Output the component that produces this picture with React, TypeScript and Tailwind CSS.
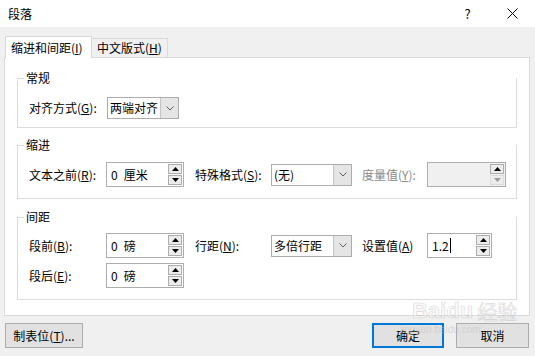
import React from "react";

const Up = ({ color = "#000" }: { color?: string }) => (
  <svg width="7" height="4" viewBox="0 0 7 4"><path d="M0 4 L3.5 0 L7 4 Z" fill={color} /></svg>
);
const Down = ({ color = "#000" }: { color?: string }) => (
  <svg width="7" height="4" viewBox="0 0 7 4"><path d="M0 0 L3.5 4 L7 0 Z" fill={color} /></svg>
);

function Spin({ num, unit, w, disabled, cursor }: { num: string; unit?: string; w: string; disabled?: boolean; cursor?: boolean }) {
  return (
    <div className={`${w} h-[25px] border border-[#adadad] flex items-stretch ${disabled ? "bg-[#f0f0f0]" : "bg-white"}`}>
      <div className="flex-1 flex items-center pl-[4px] leading-none">
        <span>{num}</span>
        {unit && <span className="ml-[6px]">{unit}</span>}
        {cursor && <span className="ml-[1px] w-px h-[15px] bg-black" />}
      </div>
      <div className="w-[14px] flex flex-col gap-px py-px mr-px">
        <div className="flex-1 border border-[#adadad] bg-[#ececec] flex items-center justify-center">
          <Up />
        </div>
        <div className={`flex-1 border ${disabled ? "border-[#dcdcdc]" : "border-[#adadad]"} bg-[#ececec] flex items-center justify-center`}>
          <Down color={disabled ? "#9a9a9a" : "#000"} />
        </div>
      </div>
    </div>
  );
}

function Combo({ value, w }: { value: string; w: string }) {
  return (
    <div className={`${w} h-[22px] border border-[#adadad] bg-white flex items-stretch`}>
      <div className="flex-1 flex items-center pl-[2px] leading-none whitespace-nowrap overflow-hidden">{value}</div>
      <div className="w-[18px] bg-[#e5e5e5] border-l border-[#c4c4c4] flex items-center justify-center">
        <svg width="8" height="5" viewBox="0 0 8 5"><path d="M0.5 0.5 L4 4 L7.5 0.5" fill="none" stroke="#606060" strokeWidth="1" /></svg>
      </div>
    </div>
  );
}

function Group({ title, h, pt, children }: { title: string; h: string; pt: string; children: React.ReactNode }) {
  return (
    <div className={`relative mx-[12px] ${h} ${pt} border-x border-b border-[#dcdcdc]`}>
      <span className="absolute left-0 top-0 w-[6px] h-px bg-[#dcdcdc]" />
      <span className="absolute left-[7px] top-[-8px] leading-[16px] px-px bg-white">{title}</span>
      <div className="pl-[11px] flex flex-col gap-[5px]">{children}</div>
    </div>
  );
}

const Label = ({ w, children, gray }: { w: string; children: React.ReactNode; gray?: boolean }) => (
  <div className={`${w} shrink-0 leading-none whitespace-nowrap ${gray ? "text-[#8a8a8a]" : ""}`}>{children}</div>
);

export default function App() {
  return (
    <div className="w-[535px] h-[356px] bg-[#f0f0f0] flex flex-col text-[12px] text-black font-['Noto_Sans_CJK_SC','Microsoft_YaHei',sans-serif] relative overflow-hidden">
      {/* title bar */}
      <div className="h-[27px] bg-white flex items-center shrink-0">
        <span className="pl-[8px] leading-none">段落</span>
        <div className="ml-auto flex h-full">
          <div className="w-[45px] flex items-center justify-center text-[13px] leading-none">?</div>
          <div className="w-[45px] flex items-center justify-center">
            <svg width="11" height="11" viewBox="0 0 11 11"><path d="M0.5 0.5 L10.5 10.5 M10.5 0.5 L0.5 10.5" stroke="#000" strokeWidth="1" /></svg>
          </div>
        </div>
      </div>

      {/* tabs */}
      <div className="pt-[9px] pl-[5px] flex items-end shrink-0">
        <div className="relative z-10 mb-[-1px] w-[87px] h-[22px] bg-white border border-b-0 border-[#d9d9d9] flex items-center pl-[5px] leading-none">
          缩进和间距(<u>I</u>)
        </div>
        <div className="w-[76px] h-[19px] border border-l-0 border-b-0 border-[#d9d9d9] flex items-center pl-[5px] leading-none">
          中文版式(<u>H</u>)
        </div>
      </div>

      {/* panel */}
      <div className="mx-[4px] w-[526px] h-[259px] border border-[#d9d9d9] bg-white shrink-0 pt-[20px] flex flex-col">
        <Group title="常规" h="h-[50px]" pt="pt-[19px]">
          <div className="flex items-center">
            <Label w="w-[78px]">对齐方式(<u>G</u>):</Label>
            <Combo value="两端对齐" w="w-[72px]" />
          </div>
        </Group>

        <div className="h-[17px] shrink-0" />

        <Group title="缩进" h="h-[54px]" pt="pt-[17px]">
          <div className="flex items-center">
            <Label w="w-[77px]">文本之前(<u>R</u>):</Label>
            <Spin num="0" unit="厘米" w="w-[78px]" />
            <div className="w-[11px]" />
            <Label w="w-[76px]">特殊格式(<u>S</u>):</Label>
            <Combo value="(无)" w="w-[81px]" />
            <div className="w-[10px]" />
            <Label w="w-[65px]" gray>度量值(<u>Y</u>):</Label>
            <Spin num="" w="w-[79px]" disabled />
          </div>
        </Group>

        <div className="h-[18px] shrink-0" />

        <Group title="间距" h="h-[83px]" pt="pt-[16px]">
          <div className="flex items-center">
            <Label w="w-[77px]">段前(<u>B</u>):</Label>
            <Spin num="0" unit="磅" w="w-[78px]" />
            <div className="w-[11px]" />
            <Label w="w-[76px]">行距(<u>N</u>):</Label>
            <Combo value="多倍行距" w="w-[81px]" />
            <div className="w-[10px]" />
            <Label w="w-[65px]">设置值(<u>A</u>)</Label>
            <Spin num="1.2" w="w-[65px]" cursor />
          </div>
          <div className="flex items-center">
            <Label w="w-[77px]">段后(<u>E</u>):</Label>
            <Spin num="0" unit="磅" w="w-[78px]" />
          </div>
        </Group>
      </div>

      {/* buttons */}
      <div className="mt-[7px] flex items-start shrink-0">
        <div className="ml-[5px] w-[78px] h-[25px] border border-[#adadad] bg-[#e1e1e1] flex items-center justify-center leading-none">
          制表位(<u>T</u>)...
        </div>
        <div className="ml-auto w-[72px] h-[25px] border-2 border-[#0078d7] bg-[#e1e1e1] flex items-center justify-center leading-none">
          确定
        </div>
        <div className="ml-[12px] mr-[6px] w-[73px] h-[25px] border border-[#adadad] bg-[#e1e1e1] flex items-center justify-center leading-none">
          取消
        </div>
      </div>

      {/* watermark */}
      <div className="absolute left-[400px] top-[300px] pointer-events-none select-none flex flex-col items-start opacity-50">
        <div className="flex items-end leading-none text-[#f4f4f4] font-['Liberation_Sans',sans-serif] font-bold text-[22px] [-webkit-text-stroke:0.6px_#b5b5b5]">
          <span className="ml-[12px]">Bai</span>
          <span>du</span>
          <span className="ml-[4px] font-['Noto_Sans_CJK_SC',sans-serif] font-normal text-[20px]">经验</span>
        </div>
        <div className="text-[10px] leading-none mt-[3px] text-[#c4c4c4] font-['Liberation_Sans',sans-serif]">jingyan.baidu.com</div>
      </div>
    </div>
  );
}
